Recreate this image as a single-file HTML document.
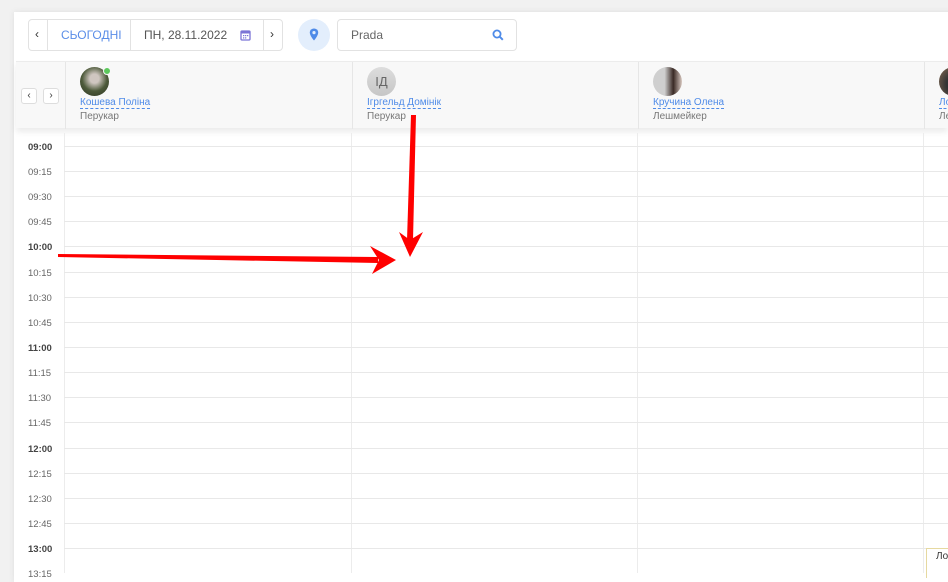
<!DOCTYPE html>
<html><head><meta charset="utf-8"><style>
*{box-sizing:border-box;margin:0;padding:0}
body{width:948px;height:573px;overflow:hidden;background:#f1f1f1;font-family:"Liberation Sans",Arial,sans-serif;position:relative}
.card{position:absolute;left:14px;top:12px;width:940px;height:570px;background:#fff;box-shadow:0 0 6px rgba(0,0,0,.08)}
.bx{position:absolute;border:1px solid #e2e2e2;border-radius:4px;background:#fff;font-size:12px;color:#555}
.hdr{position:absolute;left:16px;top:61px;width:932px;height:67px;background:#f8f8f8;box-shadow:0 4px 6px rgba(0,0,0,.08);border-top:1px solid #ececec}
.col{position:absolute;top:0;height:67px;border-left:1px solid #e6e6e6}
.av{position:absolute;left:14px;top:5px;width:29px;height:29px;border-radius:50%}
.nm{position:absolute;left:14px;top:35px;font-size:10px;color:#4f8be8;border-bottom:1px dashed #4f8be8;line-height:11px;white-space:nowrap}
.rl{position:absolute;left:14px;top:49px;font-size:10px;color:#777;white-space:nowrap}
.t{position:absolute;left:28px;font-size:9.5px;color:#666;transform:translateY(-4px)}
.t.b{font-weight:bold;color:#444}
.hl{position:absolute;left:64px;right:0;height:1px;background:#e8e8e8}
.vl{position:absolute;top:133px;bottom:0;width:1px;background:#ececec}
.sb{position:absolute;width:16px;height:16px;border:1px solid #ddd;border-radius:3px;background:#fff;font-size:10px;text-align:center;line-height:13px;color:#333}
</style></head><body>
<div class="card"></div>
<div class="bx" style="left:28px;top:19px;width:255px;height:32px"></div>
<div style="position:absolute;left:47px;top:19px;width:1px;height:32px;background:#e2e2e2"></div>
<div style="position:absolute;left:130px;top:19px;width:1px;height:32px;background:#e2e2e2"></div>
<div style="position:absolute;left:263px;top:19px;width:1px;height:32px;background:#e2e2e2"></div>
<div style="position:absolute;left:35px;top:27px;font-size:12px;color:#333">‹</div>
<div style="position:absolute;left:61px;top:28px;font-size:12px;color:#5b8ee8">СЬОГОДНІ</div>
<div style="position:absolute;left:144px;top:28px;font-size:12px;color:#555">ПН, 28.11.2022</div>
<svg style="position:absolute;left:240px;top:29px" width="11" height="12" viewBox="0 0 11 12"><rect x="1" y="2" width="9" height="9" rx="1" fill="none" stroke="#7b74d6" stroke-width="1.3"/><rect x="1" y="2" width="9" height="2.5" fill="#7b74d6"/><g fill="#7b74d6"><rect x="3" y="6" width="1.3" height="1.2"/><rect x="5" y="6" width="1.3" height="1.2"/><rect x="7" y="6" width="1.3" height="1.2"/><rect x="3" y="8.3" width="1.3" height="1.2"/><rect x="5" y="8.3" width="1.3" height="1.2"/></g></svg>
<div style="position:absolute;left:270px;top:27px;font-size:12px;color:#333">›</div>
<div style="position:absolute;left:298px;top:19px;width:32px;height:32px;border-radius:50%;background:#e3eefc"></div>
<svg style="position:absolute;left:309px;top:28px" width="10" height="13" viewBox="0 0 10 13"><path d="M5 0.5C2.5 0.5 0.8 2.3 0.8 4.6 0.8 7.6 5 12.5 5 12.5S9.2 7.6 9.2 4.6C9.2 2.3 7.5 0.5 5 0.5Z" fill="#4f8be8"/><circle cx="5" cy="4.6" r="1.6" fill="#e3eefc"/></svg>
<div class="bx" style="left:337px;top:19px;width:180px;height:32px"></div>
<div style="position:absolute;left:351px;top:28px;font-size:12px;color:#666">Prada</div>
<svg style="position:absolute;left:492px;top:29px" width="12" height="12" viewBox="0 0 12 12"><circle cx="5" cy="5" r="3.6" fill="none" stroke="#4f8be8" stroke-width="1.8"/><path d="M7.6 7.6L10.8 10.8" stroke="#4f8be8" stroke-width="2"/></svg>

<div class="hdr">
<div class="sb" style="left:5px;top:26px">‹</div><div class="sb" style="left:27px;top:26px">›</div>
<div class="col" style="left:49px;width:287px">
<div class="av" style="background:radial-gradient(circle at 50% 40%,#cfc6c0 20%,#4d5a3a 55%,#2c3320)"></div>
<div style="position:absolute;left:37px;top:5px;width:8px;height:8px;border-radius:50%;background:#5cc85c;border:1px solid #f8f8f8"></div>
<div class="nm">Кошева Поліна</div><div class="rl">Перукар</div></div>
<div class="col" style="left:336px;width:286px">
<div class="av" style="background:linear-gradient(#ddd,#c6c6c6);color:#666;font-size:13px;text-align:center;line-height:29px">ІД</div>
<div class="nm">Ігргельд Домінік</div><div class="rl">Перукар</div></div>
<div class="col" style="left:622px;width:286px">
<div class="av" style="background:linear-gradient(90deg,#cfcfcf 40%,#3a2a25 70%,#d8c8c0)"></div>
<div class="nm">Кручина Олена</div><div class="rl">Лешмейкер</div></div>
<div class="col" style="left:908px;width:30px">
<div class="av" style="background:radial-gradient(circle at 60% 60%,#333 40%,#8a6d55)"></div>
<div class="nm">Ло</div><div class="rl">Ле</div></div>
</div>

<div class="vl" style="left:64px"></div>
<div class="vl" style="left:351px"></div>
<div class="vl" style="left:637px"></div>
<div class="vl" style="left:923px"></div>

<div class="hl" style="top:146px"></div><div class="t b" style="top:146px">09:00</div>
<div class="hl" style="top:171px"></div><div class="t" style="top:171px">09:15</div>
<div class="hl" style="top:196px"></div><div class="t" style="top:196px">09:30</div>
<div class="hl" style="top:221px"></div><div class="t" style="top:221px">09:45</div>
<div class="hl" style="top:246px"></div><div class="t b" style="top:246px">10:00</div>
<div class="hl" style="top:272px"></div><div class="t" style="top:272px">10:15</div>
<div class="hl" style="top:297px"></div><div class="t" style="top:297px">10:30</div>
<div class="hl" style="top:322px"></div><div class="t" style="top:322px">10:45</div>
<div class="hl" style="top:347px"></div><div class="t b" style="top:347px">11:00</div>
<div class="hl" style="top:372px"></div><div class="t" style="top:372px">11:15</div>
<div class="hl" style="top:397px"></div><div class="t" style="top:397px">11:30</div>
<div class="hl" style="top:422px"></div><div class="t" style="top:422px">11:45</div>
<div class="hl" style="top:448px"></div><div class="t b" style="top:448px">12:00</div>
<div class="hl" style="top:473px"></div><div class="t" style="top:473px">12:15</div>
<div class="hl" style="top:498px"></div><div class="t" style="top:498px">12:30</div>
<div class="hl" style="top:523px"></div><div class="t" style="top:523px">12:45</div>
<div class="hl" style="top:548px"></div><div class="t b" style="top:548px">13:00</div>
<div class="t" style="top:573px">13:15</div>
<div style="position:absolute;left:926px;top:548px;width:30px;height:30px;border-left:1px solid #e6d9a0;border-top:1px solid #e6d9a0;background:#fff;font-size:10px;color:#333;padding:2px 0 0 9px">Ло</div>

<svg style="position:absolute;left:0;top:0" width="948" height="573">
<path d="M58 254L378 257L378 263L58 257Z" fill="#f00"/>
<path d="M370 246L396 260L372 274L379 260Z" fill="#f00"/>
<path d="M411 115L416 115L413 240L407 240Z" fill="#f00"/>
<path d="M399 232L410 240L423 232L410 257Z" fill="#f00"/>
</svg>
</body></html>
